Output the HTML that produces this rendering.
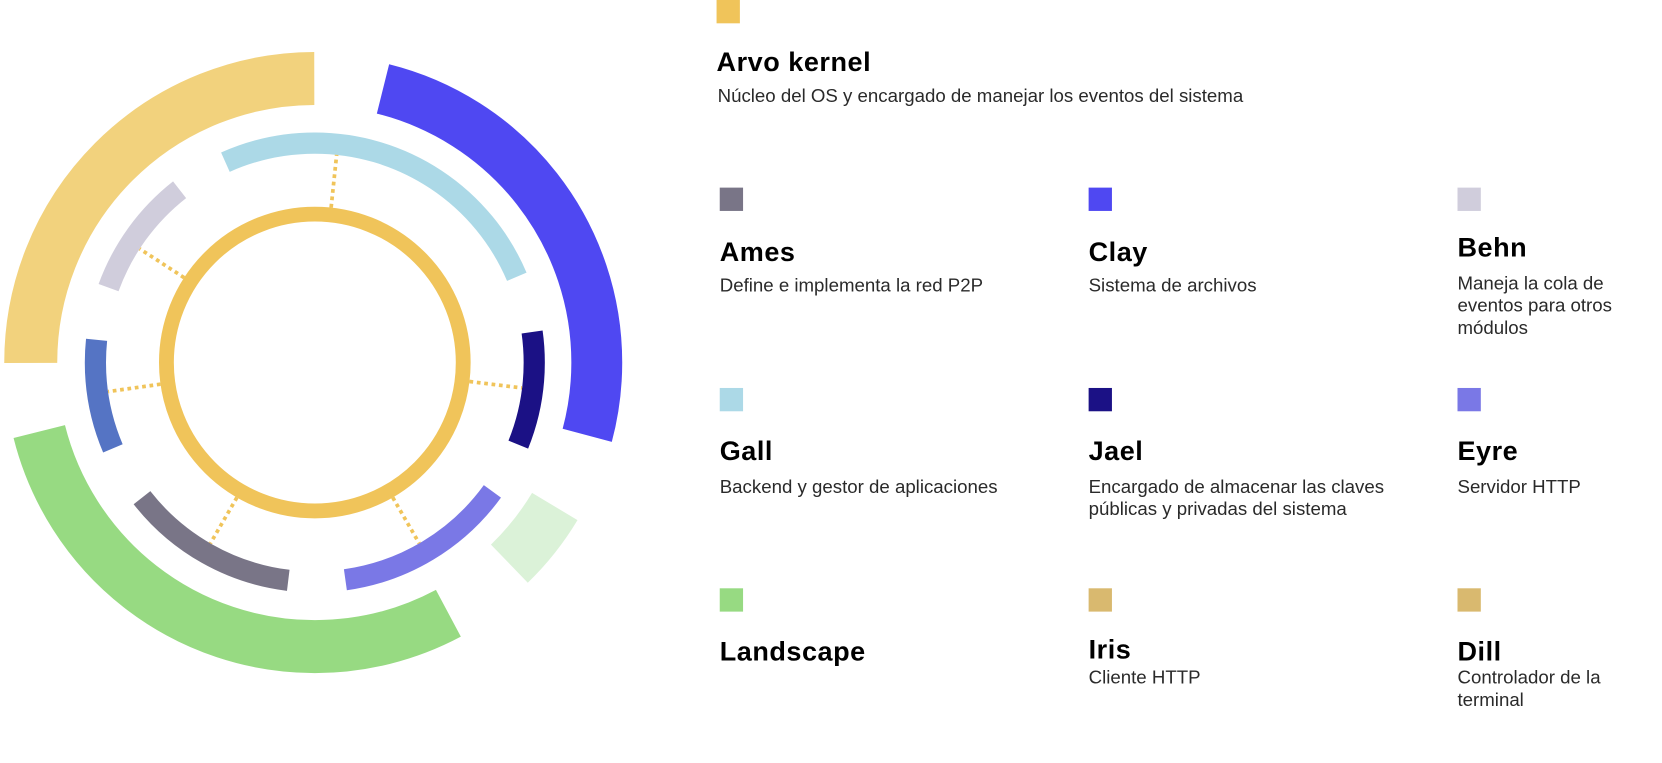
<!DOCTYPE html>
<html><head><meta charset="utf-8"><style>
html,body{margin:0;padding:0;background:#fff;width:1662px;height:763px;overflow:hidden;position:relative}
#w{position:absolute;left:0;top:0;width:1568px;height:720px;transform:scale(1.06);transform-origin:0 0}
.sq{position:absolute;width:22px;height:22px}
.t{position:absolute;font-family:"Liberation Sans",sans-serif;font-weight:bold;font-size:25.5px;color:#000;letter-spacing:0.5px}
.d{position:absolute;font-family:"Liberation Sans",sans-serif;font-size:17.6px;color:#2a2a2a;line-height:21px}
</style></head><body>
<div id="w">
<svg width="600" height="720" style="position:absolute;left:0;top:0">
<g transform="translate(297,342)">
 <g transform="rotate(-90)" fill="none">
  <circle r="268" stroke="#f2d27d" stroke-width="50" pathLength="360" stroke-dasharray="90 270" stroke-dashoffset="-270"/>
  <circle r="266" stroke="#4f48f2" stroke-width="48" pathLength="360" stroke-dasharray="91 269" stroke-dashoffset="-14"/>
  <circle r="264" stroke="#dbf2d8" stroke-width="50" pathLength="360" stroke-dasharray="15 345" stroke-dashoffset="-121"/>
  <circle r="268" stroke="#97da82" stroke-width="50" pathLength="360" stroke-dasharray="104 256" stroke-dashoffset="-152"/>
  <circle r="207" stroke="#acd9e7" stroke-width="20" pathLength="360" stroke-dasharray="91 269" stroke-dashoffset="-336"/>
  <circle r="207" stroke="#d0cddc" stroke-width="20" pathLength="360" stroke-dasharray="32 328" stroke-dashoffset="-290"/>
  <circle r="207" stroke="#5574c4" stroke-width="20" pathLength="360" stroke-dasharray="29 331" stroke-dashoffset="-247"/>
  <circle r="207" stroke="#1b1185" stroke-width="20" pathLength="360" stroke-dasharray="30 330" stroke-dashoffset="-82"/>
  <circle r="207" stroke="#7a78e6" stroke-width="20" pathLength="360" stroke-dasharray="46 314" stroke-dashoffset="-126"/>
  <circle r="207" stroke="#797587" stroke-width="20" pathLength="360" stroke-dasharray="45 315" stroke-dashoffset="-187"/>
  <circle r="140" stroke="#f0c45a" stroke-width="14"/>
 </g>
 <g stroke="#f0c45a" stroke-width="3.5" stroke-dasharray="3.5 3.5">
  <line x1="0" y1="-147" x2="0" y2="-197" transform="rotate(6)"/>
  <line x1="0" y1="-147" x2="0" y2="-197" transform="rotate(303)"/>
  <line x1="0" y1="-147" x2="0" y2="-197" transform="rotate(262)"/>
  <line x1="0" y1="-147" x2="0" y2="-197" transform="rotate(97)"/>
  <line x1="0" y1="-147" x2="0" y2="-197" transform="rotate(210)"/>
  <line x1="0" y1="-147" x2="0" y2="-197" transform="rotate(150)"/>
 </g>
</g>
</svg>

<div class="sq" style="left:676px;top:0;background:#f0c45a"></div>
<div class="t" style="left:676px;top:45px">Arvo kernel</div>
<div class="d" style="left:677px;top:80px">Núcleo del OS y encargado de manejar los eventos del sistema</div>

<div class="sq" style="left:679px;top:177px;background:#797587"></div>
<div class="t" style="left:679px;top:224px">Ames</div>
<div class="d" style="left:679px;top:259px">Define e implementa la red P2P</div>

<div class="sq" style="left:1027px;top:177px;background:#4f48f2"></div>
<div class="t" style="left:1027px;top:224px">Clay</div>
<div class="d" style="left:1027px;top:259px">Sistema de archivos</div>

<div class="sq" style="left:1375px;top:177px;background:#d0cddc"></div>
<div class="t" style="left:1375px;top:220px">Behn</div>
<div class="d" style="left:1375px;top:257px">Maneja la cola de<br>eventos para otros<br>módulos</div>

<div class="sq" style="left:679px;top:366px;background:#acd9e7"></div>
<div class="t" style="left:679px;top:412px">Gall</div>
<div class="d" style="left:679px;top:449px">Backend y gestor de aplicaciones</div>

<div class="sq" style="left:1027px;top:366px;background:#1b1185"></div>
<div class="t" style="left:1027px;top:412px">Jael</div>
<div class="d" style="left:1027px;top:449px">Encargado de almacenar las claves<br>públicas y privadas del sistema</div>

<div class="sq" style="left:1375px;top:366px;background:#7a78e6"></div>
<div class="t" style="left:1375px;top:412px">Eyre</div>
<div class="d" style="left:1375px;top:449px">Servidor HTTP</div>

<div class="sq" style="left:679px;top:555px;background:#97da82"></div>
<div class="t" style="left:679px;top:601px">Landscape</div>

<div class="sq" style="left:1027px;top:555px;background:#d9b96f"></div>
<div class="t" style="left:1027px;top:599px">Iris</div>
<div class="d" style="left:1027px;top:629px">Cliente HTTP</div>

<div class="sq" style="left:1375px;top:555px;background:#d9b96f"></div>
<div class="t" style="left:1375px;top:601px">Dill</div>
<div class="d" style="left:1375px;top:629px">Controlador de la<br>terminal</div>
</div>
</body></html>
